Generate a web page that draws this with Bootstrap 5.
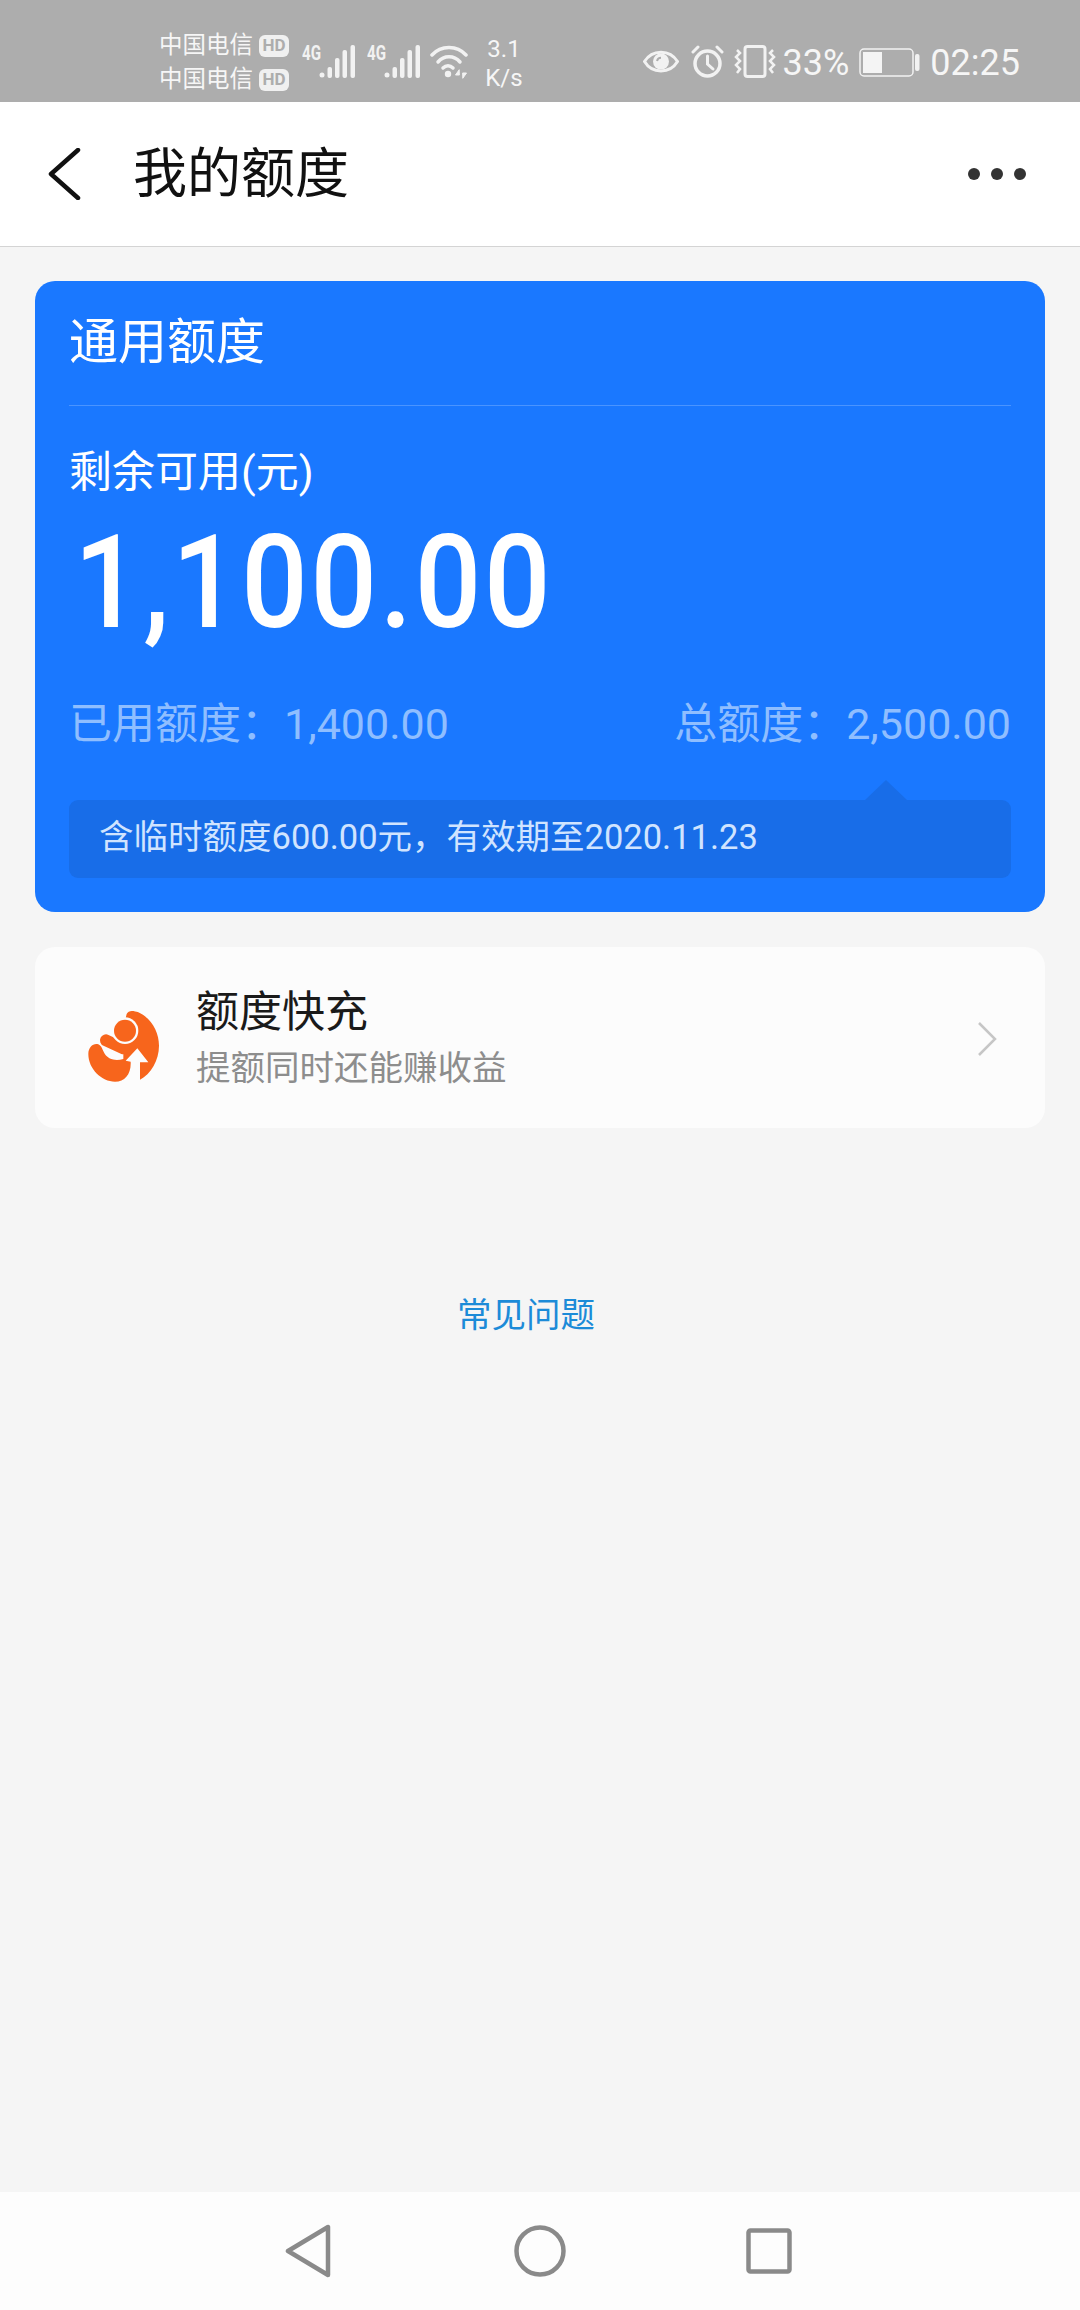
<!DOCTYPE html>
<html lang="zh-CN">
<head>
<meta charset="UTF-8">
<meta name="viewport" content="width=device-width, initial-scale=1.0">
<title>我的额度</title>
<link href="https://cdn.jsdelivr.net/npm/bootstrap@5.3.3/dist/css/bootstrap.min.css" rel="stylesheet">
<style>
html, body { height: 100%; }
body { width: 1080px; height: 2310px; background: #f5f5f5; font-family: Roboto, "Noto Sans CJK SC", sans-serif; overflow: hidden; }
.phone { height: 2310px; }

/* status bar */
.status-bar { height: 102px; background: #adadad; color: #f6f6f6; padding-left: 159px; padding-right: 60px; }
.carrier { font-size: 23.500px; line-height: 34px; width: 143px; padding-top: 28px; }
.hd-tag { display: inline-block; background: #f0f0f0; color: #adadad; font-size: 17px; font-weight: 700; line-height: 21px; height: 22px; width: 30px; text-align: center; border-radius: 6px; vertical-align: 2px; margin-left: 6px; }
.net-speed { font-size: 24px; line-height: 29px; text-align: center; width: 46px; margin-left: 13px; padding-top: 35px; }
.sig { margin-top: 39px; }
.sig + .sig { margin-left: 12px; }
.wifi-ic { margin-top: 45px; margin-left: 10px; }
.right-icons { padding-top: 45px; }
.gap-a { margin-left: 12px; }
.gap-b { margin-left: 10px; }
.batt-pct { font-size: 36px; line-height: 40px; margin-left: 7px; margin-top: -2px; }
.batt-ic { margin-left: 10px; margin-top: 3px; }
.clock { font-size: 36px; line-height: 40px; margin-left: 10px; margin-top: -2px; }

/* app nav */
.app-nav { height: 145px; background: #fff; border-bottom: 1px solid #d4d4d4; padding: 0 53px 0 48px; }
.app-title { font-size: 54px; color: #111; margin-left: 52px; margin-top: 1px; line-height: 1; }

.quota-card { margin: 34px 35px 0; height: 631px; background: #1a78ff; border-radius: 20px; color: #fff; padding: 0 34px; }
.quota-head { height: 125px; font-size: 49px; line-height: 82px; border-bottom: 1px solid #4a94ff; padding-top: 21px; }
.quota-label { font-size: 43px; line-height: 48px; margin-top: 42px; }
.quota-num { font-size: 130px; font-weight: 500; line-height: 128px; margin-top: 23px; margin-left: 5px; letter-spacing: 3px; transform: scaleX(.9); transform-origin: left center; white-space: nowrap; }
.quota-stat { font-size: 43px; line-height: 50px; color: #8fbeff; margin-top: 52px; }
.temp-tip { position: relative; height: 78px; background: #186de8; border-radius: 9px; margin-top: 51px; padding-left: 30px; font-size: 34.500px; line-height: 74px; color: #d0e4ff; }
.temp-tip::before { content: ""; position: absolute; right: 104px; top: -20px; border-left: 21px solid transparent; border-right: 21px solid transparent; border-bottom: 20px solid #186de8; }

.promo-card { margin: 35px 35px 0; height: 181px; background: #fcfcfc; border-radius: 20px; padding: 2px 48px 0 25px; }
.promo-title { font-size: 43px; line-height: 50px; color: #1a1a1a; }
.promo-sub { font-size: 34.500px; line-height: 46px; color: #8d8d8d; margin-top: 8px; }
.promo-text { margin-left: 16px; }

.faq-link { font-size: 34.500px; color: #1c8bd8; text-decoration: none; margin-top: 164px; line-height: 46px; margin-right: 28px; }

.soft-keys { height: 118px; background: #fdfdfd; }
.key-slot { width: 232px; }
.key-square { margin-right: 6px; }
</style>
</head>
<body>
<div class="phone d-flex flex-column">

  <!-- status bar -->
  <div class="status-bar d-flex flex-shrink-0">
    <div class="carrier text-nowrap">
      <div>中国电信<span class="hd-tag">HD</span></div>
      <div>中国电信<span class="hd-tag">HD</span></div>
    </div>
    <svg class="sig" width="53" height="40" viewBox="0 -6 53 40" fill="#f2f2f2">
      <text x="0" y="15" font-family="Roboto" font-weight="700" font-size="20" textLength="19" lengthAdjust="spacingAndGlyphs">4G</text>
      <circle cx="20" cy="30" r="2.500"/>
      <rect x="25.500" y="22" width="4.500" height="11" rx="2"/>
      <rect x="33" y="13" width="4.500" height="20" rx="2"/>
      <rect x="40.500" y="5" width="4.500" height="28" rx="2"/>
      <rect x="48.500" y="0" width="4.500" height="33" rx="2"/>
    </svg>
    <svg class="sig" width="53" height="40" viewBox="0 -6 53 40" fill="#f2f2f2">
      <text x="0" y="15" font-family="Roboto" font-weight="700" font-size="20" textLength="19" lengthAdjust="spacingAndGlyphs">4G</text>
      <circle cx="20" cy="30" r="2.500"/>
      <rect x="25.500" y="22" width="4.500" height="11" rx="2"/>
      <rect x="33" y="13" width="4.500" height="20" rx="2"/>
      <rect x="40.500" y="5" width="4.500" height="28" rx="2"/>
      <rect x="48.500" y="0" width="4.500" height="33" rx="2"/>
    </svg>
    <svg class="wifi-ic" width="38" height="34" viewBox="0 0 38 34" fill="none" stroke="#f2f2f2" stroke-width="3.500" stroke-linecap="round">
      <path d="M2 10 C11 0 27 0 36 10"/>
      <path d="M8 17 C14 10 24 10 30 17"/>
      <path d="M13 23 C16 20 20 20 23 23"/>
      <circle cx="18" cy="29" r="3.200" fill="#f2f2f2" stroke="none"/>
      <path d="M29 25 L25.500 30 H29 Z M33 33 L36.500 28 H33 Z" stroke-width="1" fill="#f2f2f2"/>
    </svg>
    <div class="net-speed">3.1<br>K/s</div>

    <div class="right-icons d-flex align-items-start ms-auto">
      <svg width="36" height="33" viewBox="0 0 36 33" fill="none" stroke="#f2f2f2">
        <path d="M1.500 16.500 C9 4 27 4 34.500 16.500 C27 29 9 29 1.500 16.500 Z" stroke-width="3"/>
        <circle cx="18" cy="16.500" r="8" fill="#f2f2f2" stroke="none"/>
        <path d="M14 16 C14.500 14 16 12.800 18 12.800" stroke="#adadad" stroke-width="2"/>
      </svg>
      <svg class="gap-a" width="33" height="33" viewBox="0 0 33 33" fill="none" stroke="#f2f2f2" stroke-width="3.500" stroke-linecap="round">
        <circle cx="16.500" cy="18.500" r="12.500"/>
        <path d="M16.500 11 V19 L22 24" stroke-width="3"/>
        <path d="M2 7 L7 2 M31 7 L26 2" stroke-width="3"/>
      </svg>
      <svg class="gap-b" width="42" height="33" viewBox="0 0 42 33" fill="none" stroke="#f2f2f2">
        <rect x="11" y="1.500" width="20" height="30" rx="2.500" stroke-width="3"/>
        <path d="M3 5 L6 8 L2 12 L6 16 L2 20 L6 24 L3 28 M39 5 L36 8 L40 12 L36 16 L40 20 L36 24 L39 28" stroke-width="2.500"/>
      </svg>
      <span class="batt-pct">33%</span>
      <svg class="batt-ic" width="61" height="29" viewBox="0 0 61 29" fill="none">
        <rect x="1" y="1" width="53" height="27" rx="4" stroke="#f2f2f2" stroke-width="1.500"/>
        <rect x="4" y="4" width="19" height="21" fill="#f4f4f4"/>
        <rect x="56" y="6" width="4.500" height="17" rx="2" fill="#f2f2f2"/>
      </svg>
      <span class="clock">02:25</span>
    </div>
  </div>

  <!-- title bar -->
  <div class="app-nav d-flex align-items-center flex-shrink-0">
    <svg width="33" height="52" viewBox="0 0 33 52" fill="none" stroke="#111" stroke-width="4.500" stroke-linecap="round" stroke-linejoin="round">
      <path d="M30 2 L3 26 L30 50"/>
    </svg>
    <div class="app-title">我的额度</div>
    <svg class="ms-auto" width="60" height="14" viewBox="0 0 60 14" fill="#333">
      <circle cx="7" cy="7" r="6"/><circle cx="30" cy="7" r="6"/><circle cx="53" cy="7" r="6"/>
    </svg>
  </div>

  <!-- 通用额度 -->
  <div class="quota-card flex-shrink-0">
    <div class="quota-head">通用额度</div>
    <div class="quota-label">剩余可用(元)</div>
    <div class="quota-num">1,100.00</div>
    <div class="quota-stat d-flex justify-content-between">
      <span>已用额度：1,400.00</span>
      <span>总额度：2,500.00</span>
    </div>
    <div class="temp-tip">含临时额度600.00元，有效期至2020.11.23</div>
  </div>

  <!-- 额度快充 -->
  <div class="promo-card d-flex align-items-center flex-shrink-0">
    <svg width="120" height="120" viewBox="0 0 360 360">
      <path fill="#f7651c" d="M200 105 C205 92 222 95 235 100 C275 118 297 160 297 200 C297 245 272 285 240 302 L240 250 L265 250 L232 208 L197 245 L212 248 C214 285 195 308 165 308 C125 308 85 270 85 225 C85 205 98 193 112 195 C125 197 128 215 135 226 C145 240 165 248 190 240 L190 190 L195 125 Z"/>
      <path fill="none" stroke="#f7651c" stroke-width="36" stroke-linecap="round" d="M138 184 L190 208"/>
      <circle cx="195" cy="155" r="40" fill="#fcfcfc"/>
      <circle cx="195" cy="155" r="33" fill="#f7651c"/>
    </svg>
    <div class="promo-text">
      <div class="promo-title">额度快充</div>
      <div class="promo-sub">提额同时还能赚收益</div>
    </div>
    <svg class="ms-auto" width="20" height="36" viewBox="0 0 20 36" fill="none" stroke="#c6c6c6" stroke-width="2.500">
      <path d="M2 2 L18 18 L2 34"/>
    </svg>
  </div>

  <a class="faq-link align-self-center" href="#">常见问题</a>

  <!-- soft keys -->
  <div class="soft-keys d-flex justify-content-center align-items-center mt-auto flex-shrink-0">
    <div class="key-slot d-flex justify-content-center">
      <svg width="46" height="54" viewBox="0 0 46 54" fill="none" stroke="#8a8a8a" stroke-width="4.500" stroke-linejoin="round">
        <path d="M43 3 V51 L3 27 Z"/>
      </svg>
    </div>
    <div class="key-slot d-flex justify-content-center">
      <svg width="52" height="52" viewBox="0 0 52 52" fill="none" stroke="#8a8a8a" stroke-width="4.500">
        <circle cx="26" cy="26" r="23.500"/>
      </svg>
    </div>
    <div class="key-slot d-flex justify-content-center">
      <svg class="key-square" width="46" height="46" viewBox="0 0 46 46" fill="none" stroke="#8a8a8a" stroke-width="4.500" stroke-linejoin="round">
        <rect x="2.500" y="2.500" width="41" height="41" rx="2"/>
      </svg>
    </div>
  </div>
</div>
<script src="https://cdn.jsdelivr.net/npm/bootstrap@5.3.3/dist/js/bootstrap.bundle.min.js"></script>
</body>
</html>
